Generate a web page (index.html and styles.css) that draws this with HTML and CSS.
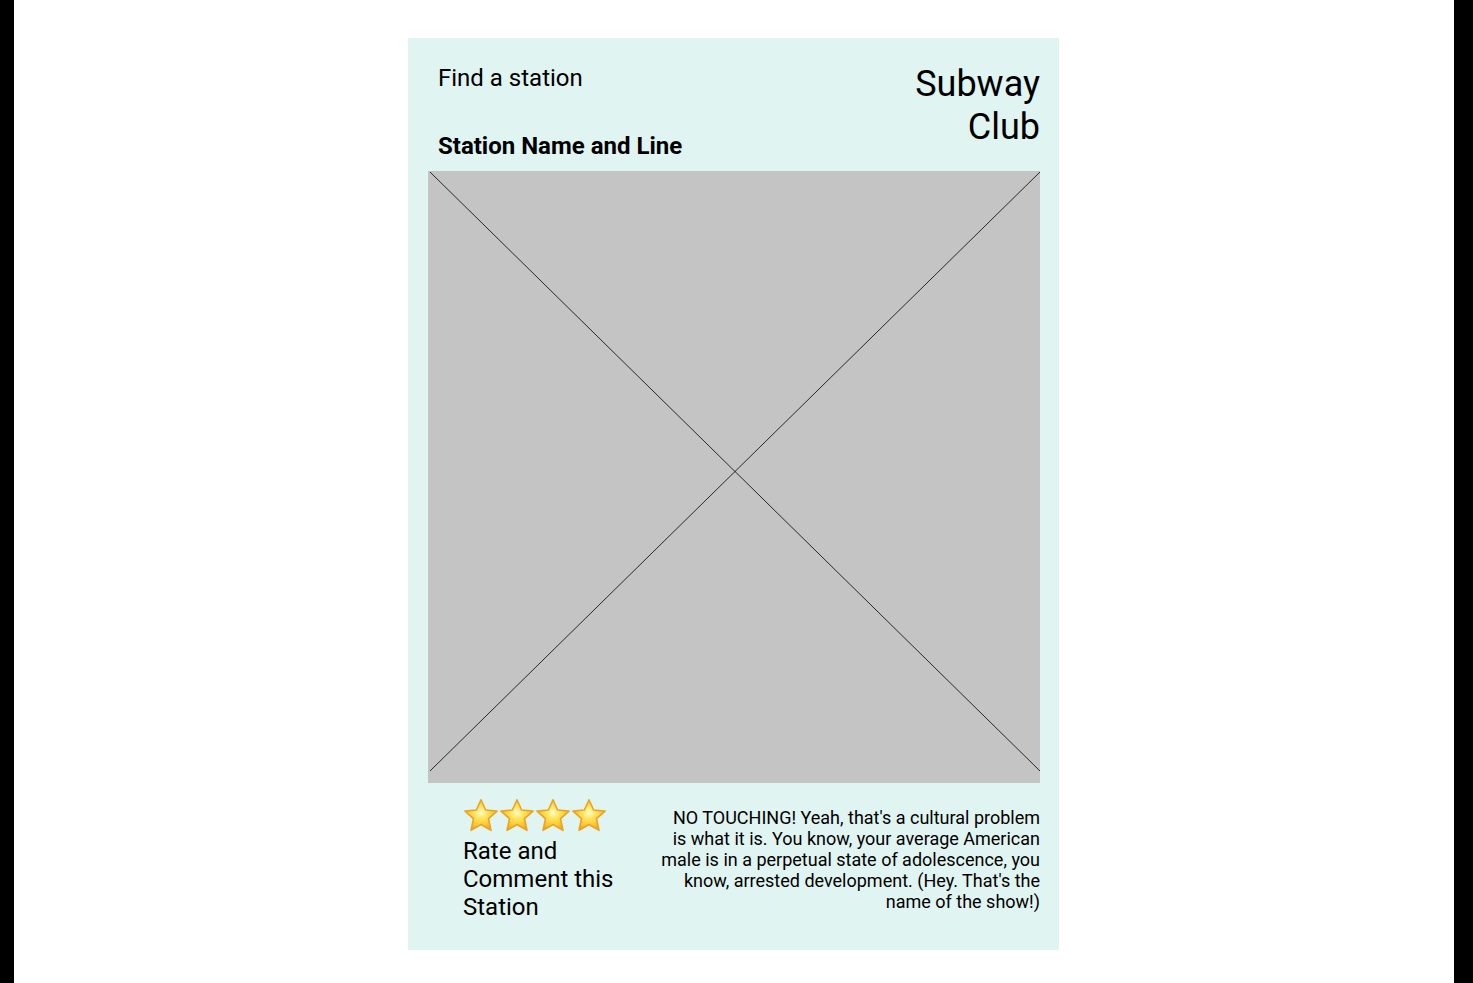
FILE: index.html
```html
<!DOCTYPE html>
<html lang="en">
<head>
<meta charset="UTF-8">
<meta name="viewport" content="width=device-width, initial-scale=1.0">
<link rel="stylesheet" href="styles.css">
<title>Subway Club</title>
</head>
<body>

<main class="card">

<header class="cardHead">
<div class="headLeft">
<p class="findText">Find a station</p>
<h2 class="stationName">Station Name and Line</h2>
</div>
<h1 class="brand">Subway<br>Club</h1>
</header>

<div class="photo">
<svg viewBox="0 0 612 612" width="612" height="612">
<rect width="612" height="612" fill="#C4C4C4"/>
<line x1="2" y1="1" x2="612" y2="600" stroke="#000" stroke-width="0.8"/>
<line x1="612" y1="1" x2="2" y2="600" stroke="#000" stroke-width="0.8"/>
</svg>
</div>

<section class="cardFoot">

<div class="rateBox">
<div class="stars">
<svg class="star" viewBox="0 0 36 36"><use href="#starShape"/></svg>
<svg class="star" viewBox="0 0 36 36"><use href="#starShape"/></svg>
<svg class="star" viewBox="0 0 36 36"><use href="#starShape"/></svg>
<svg class="star" viewBox="0 0 36 36"><use href="#starShape"/></svg>
</div>
<p class="rateText">Rate and Comment this Station</p>
</div>

<p class="quote">NO TOUCHING! Yeah, that's a cultural problem is what it is. You know, your average American male is in a perpetual state of adolescence, you know, arrested development. (Hey. That's the name of the show!)</p>

</section>

</main>

<svg width="0" height="0" class="defs">
<defs>
<radialGradient id="starFill" cx="0.5" cy="0.42" r="0.6">
<stop offset="0" stop-color="#FFFCC8"/>
<stop offset="0.35" stop-color="#FFE35A"/>
<stop offset="0.75" stop-color="#FDC22C"/>
<stop offset="1" stop-color="#F09A16"/>
</radialGradient>
<path id="starShape" d="M18 1.8 L22.6 12 L34 13.1 L25.5 20.7 L28 32.4 L18 26.5 L8 32.4 L10.5 20.7 L2 13.1 L13.4 12 Z" fill="url(#starFill)" stroke="#E9A522" stroke-width="1.6" stroke-linejoin="round"/>
</defs>
</svg>

</body>
</html>
```

FILE: styles.css
```css
*,*:before,*:after{
margin:0;
padding:0;
box-sizing:border-box;
}

:root{
--card_bg:#E0F4F1;
--photo_bg:#C4C4C4;
--text_color:#000;
}

html{
background:#000;
}

body{
margin:0 19px 0 14px;
min-height:100vh;
background:#fff;
font-family:Roboto, "Liberation Sans", sans-serif;
color:var(--text_color);
padding-top:38px;
}

.card{
width:651px;
height:912px;
margin-left:calc(50% - 326px);
background:var(--card_bg);
padding:0 19px 0 20px;
}

.cardHead{
height:133px;
display:flex;
justify-content:space-between;
align-items:flex-start;
padding-left:10px;
}

.headLeft{
padding-top:26px;
}

.findText{
font-size:24px;
line-height:28px;
}

.stationName{
margin-top:40px;
font-size:24px;
line-height:28px;
font-weight:bold;
}

.brand{
padding-top:25px;
font-size:36px;
line-height:43px;
font-weight:normal;
text-align:right;
}

.photo{
width:612px;
height:612px;
}

.photo svg{
display:block;
}

.cardFoot{
display:flex;
justify-content:space-between;
align-items:flex-start;
padding:14px 0 0 35px;
}

.stars{
display:flex;
height:38px;
}

.star{
width:36px;
height:36px;
margin-top:1px;
}

.rateText{
width:170px;
margin-top:2px;
font-size:24px;
line-height:28px;
}

.quote{
width:382px;
padding-top:10px;
font-size:18px;
line-height:21px;
text-align:right;
}

.defs{
position:absolute;
}
```
